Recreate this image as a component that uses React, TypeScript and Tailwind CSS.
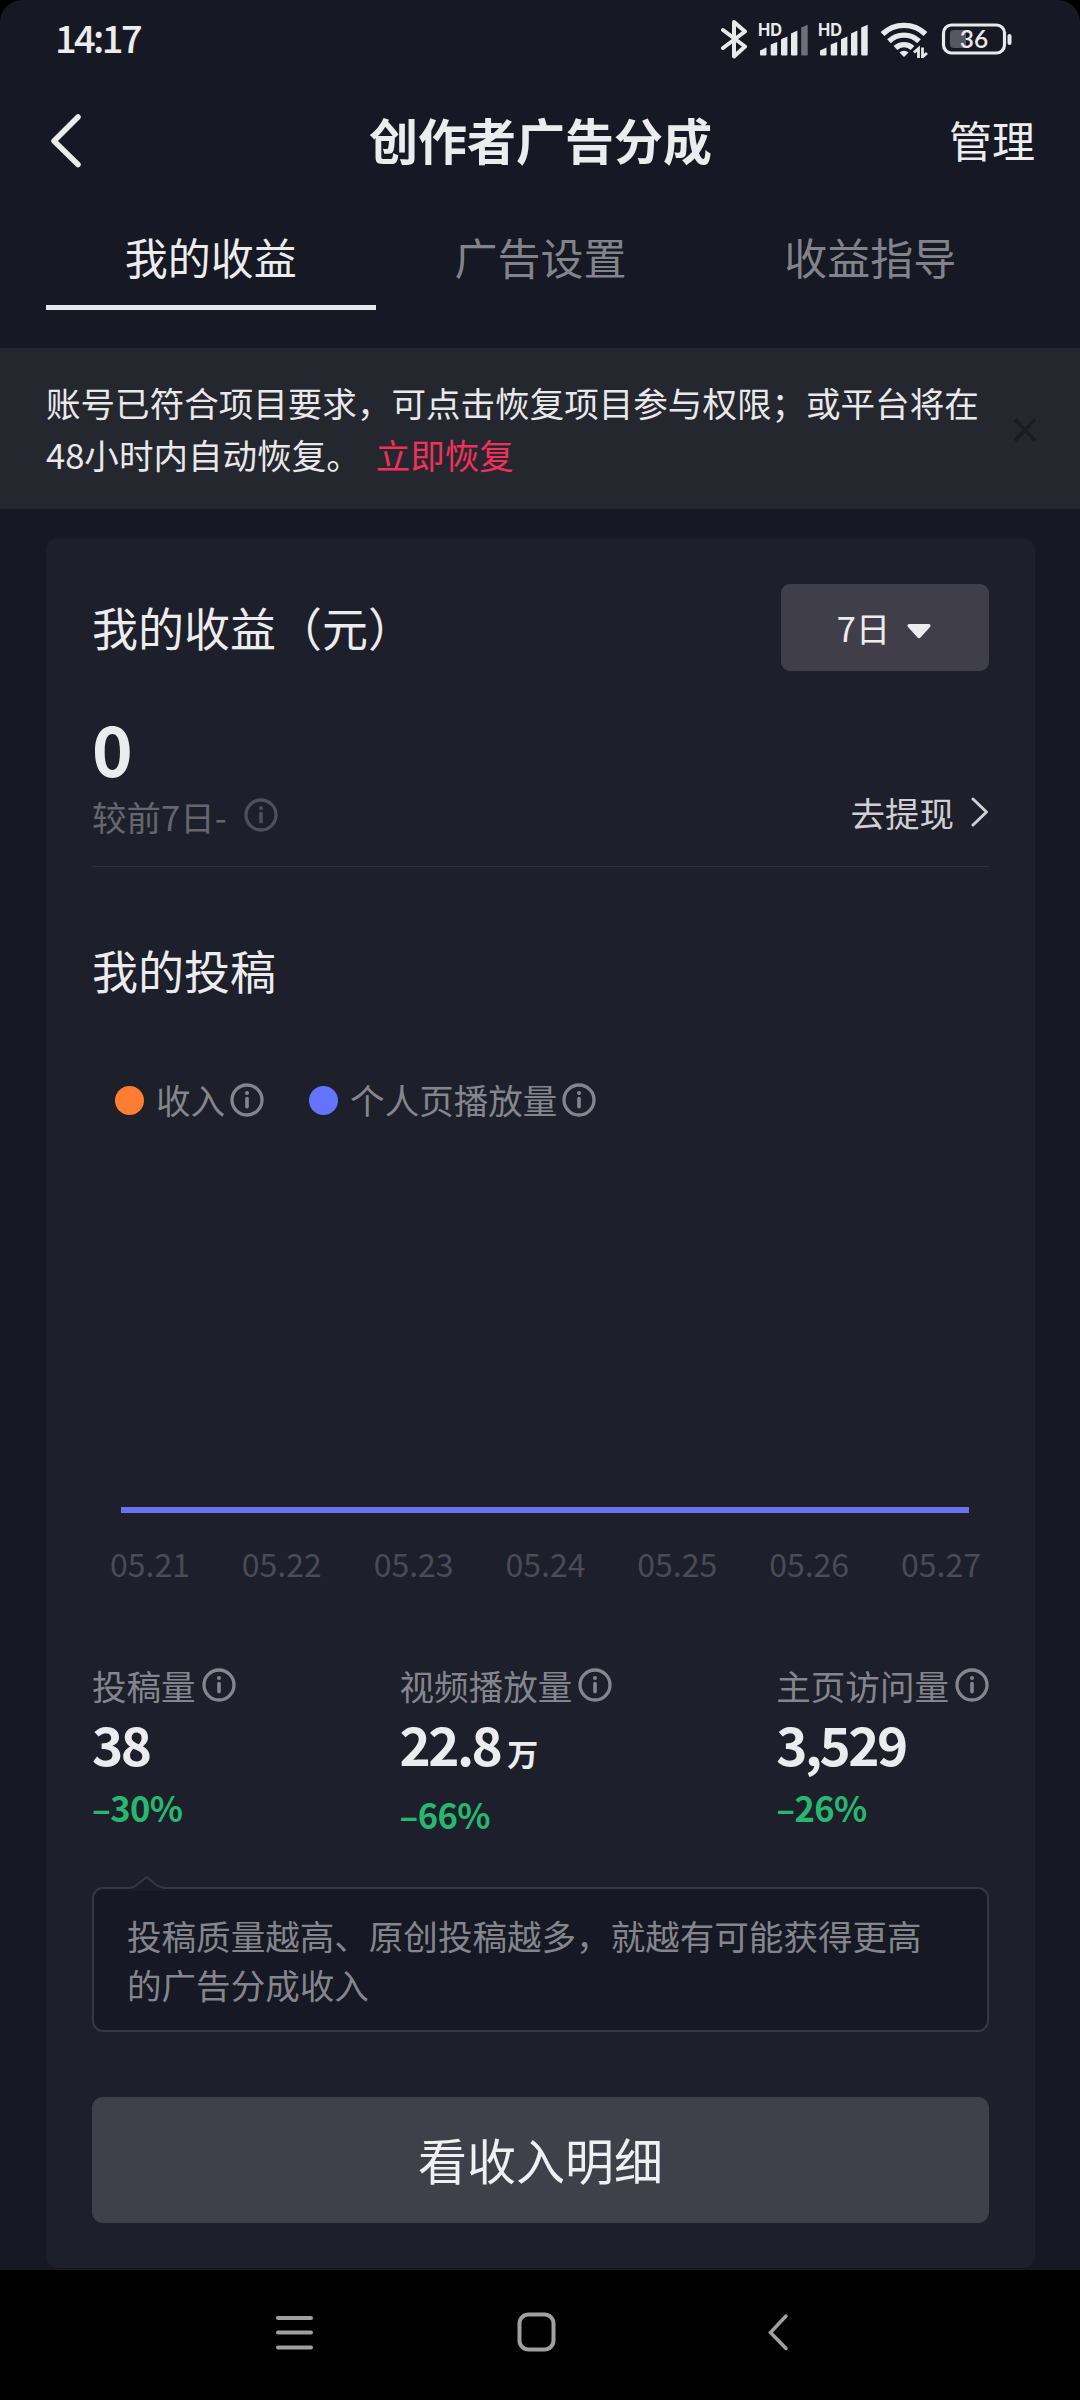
import React from 'react';
import clsx from 'clsx';

interface InfoIconProps {
  className?: string;
}

interface Stat {
  label: string;
  value: string;
  unit?: string;
  change: string;
}

const tabs = ['我的收益', '广告设置', '收益指导'];

const dates = ['05.21', '05.22', '05.23', '05.24', '05.25', '05.26', '05.27'];

const legend = [
  { label: '收入', dot: 'bg-[#ff7d32]' },
  { label: '个人页播放量', dot: 'bg-[#6574ff]' },
];

const stats: Stat[] = [
  { label: '投稿量', value: '38', change: '–30%' },
  { label: '视频播放量', value: '22.8', unit: '万', change: '–66%' },
  { label: '主页访问量', value: '3,529', change: '–26%' },
];

function InfoIcon({ className }: InfoIconProps) {
  return (
    <svg className={clsx('h-[34px] w-[34px] shrink-0', className)} viewBox="0 0 34 34" fill="none">
      <circle cx="17" cy="17" r="15" stroke="currentColor" strokeWidth="3.3" />
      <circle cx="17" cy="10" r="2" fill="currentColor" />
      <path d="M17 15.5v8.2" stroke="currentColor" strokeWidth="3.6" strokeLinecap="round" />
    </svg>
  );
}

function Signal({ weak }: { weak?: boolean }) {
  return (
    <svg className="h-[36px] w-[52px] overflow-visible" viewBox="0 0 52 36" fill="#e9e9ec">
      <text x="0" y="15" fontSize="17" fontWeight="700" fontFamily="Inter, sans-serif" textLength="24" lengthAdjust="spacingAndGlyphs">
        HD
      </text>
      <path d="M2 29.5 8.5 26.5v7a1 1 0 0 1-1 1H3a1 1 0 0 1-1-1z" />
      <path d="M12.7 23.6 19.2 21v12.5a1 1 0 0 1-1 1h-4.5a1 1 0 0 1-1-1z" />
      <path d="M23 18.2 29.4 15.4v18.1a1 1 0 0 1-1 1H24a1 1 0 0 1-1-1z" />
      <path d="M33 12.4 39.4 9.6v23.9a1 1 0 0 1-1 1H34a1 1 0 0 1-1-1z" />
      <path d="M43.2 6.6 49.7 3.8v29.7a1 1 0 0 1-1 1h-4.5a1 1 0 0 1-1-1z" opacity={weak ? 0.42 : 1} />
    </svg>
  );
}

function StatusBar() {
  return (
    <div className="flex h-[78px] items-center justify-between pr-[67px] pl-[55px]">
      <span className="mb-[4px] text-[38px] leading-none font-medium tracking-[-2.6px] text-[#ececee]">14:17</span>
      <div className="flex items-center">
        {/* Bluetooth */}
        <svg className="mr-[10px] h-[40px] w-[28px]" viewBox="0 0 28 40" fill="none" stroke="#e9e9ec" strokeWidth="4" strokeLinecap="round" strokeLinejoin="round">
          <path d="M3 11 25 27.5 14 37.5V3l11 9.5L3 29" />
        </svg>
        <div className="mr-[8px]">
          <Signal weak />
        </div>
        <Signal />
        {/* Wi-Fi */}
        <svg className="ml-[10px] h-[38px] w-[48px]" viewBox="0 0 48 38" fill="none" stroke="#e9e9ec" strokeWidth="5.4">
          <path d="M2.5 14a31 31 0 0 1 43 0" />
          <path d="M9 21.2a21.5 21.5 0 0 1 30 0" />
          <path d="M15.5 28a12.5 12.5 0 0 1 17 0" />
          <path d="M19.5 32.5a6.5 6.5 0 0 1 9 0L24 37z" fill="#e9e9ec" stroke="none" />
          <path d="M38.5 38v-9.5L34 32.5M42.5 27.5V37l4.5-4" strokeWidth="2.8" />
        </svg>
        {/* Battery */}
        <svg className="ml-[14px] h-[32px] w-[71px] overflow-visible" viewBox="0 0 71 32">
          <rect x="1.5" y="2" width="61" height="28" rx="8" fill="none" stroke="#e9e9ec" strokeWidth="3.2" />
          <path d="M12 7h12v18H12a4 4 0 0 1-4-4V11a4 4 0 0 1 4-4z" fill="#57585f" />
          <text x="32" y="24.8" textAnchor="middle" fontSize="24.5" fontWeight="600" fontFamily="Lato, sans-serif" fill="#e9e9ec">
            36
          </text>
          <rect x="65.5" y="11" width="4" height="11" rx="2" fill="#e9e9ec" />
        </svg>
      </div>
    </div>
  );
}

function Header() {
  return (
    <div className="grid h-[126px] grid-cols-[1fr_auto_1fr] items-center pr-[45px] pl-[46px] text-[#ececee]">
      <svg className="h-[54px] w-[40px]" viewBox="0 0 40 54" fill="none" stroke="currentColor" strokeWidth="5.5" strokeLinecap="round" strokeLinejoin="round">
        <path d="M32 3 8 27l24 23.5" />
      </svg>
      <h1 className="mb-[6px] text-[49px] leading-none font-bold">创作者广告分成</h1>
      <span className="mb-[4px] text-right text-[43px] leading-none">管理</span>
    </div>
  );
}

function Tabs() {
  return (
    <div className="grid grid-cols-3 pr-[45px] pl-[46px]">
      {tabs.map((tab, index) => (
        <div
          key={tab}
          className={clsx(
            'flex h-[106px] items-center justify-center border-b-[5px] pt-[3px] text-[43px] leading-none',
            index === 0 ? 'border-[#e8e8ec] text-[#ececee]' : 'border-transparent text-[#83848b]'
          )}
        >
          {tab}
        </div>
      ))}
    </div>
  );
}

function Notice() {
  return (
    <div className="mt-[38px] flex h-[161px] items-center bg-[#25272f] pr-[43px] pl-[46px]">
      <p className="w-[940px] text-[34.56px] leading-[51.5px] text-[#e9e9ec]">
        账号已符合项目要求，可点击恢复项目参与权限；或平台将在
        <br />
        48小时内自动恢复。
        <span className="ml-[15px] text-[#f2305c]">立即恢复</span>
      </p>
      <svg className="mt-[2px] ml-auto h-[24px] w-[24px]" viewBox="0 0 24 24" stroke="#191b25" strokeWidth="3.5">
        <path d="M2 1.5 22 22.5M22 1.5 2 22.5" />
      </svg>
    </div>
  );
}

function StatColumn({ stat }: { stat: Stat }) {
  return (
    <div>
      <div className="flex h-[50px] items-center text-[34.56px] leading-[50px] text-[#85868d]">
        <span className="mb-[3px]">{stat.label}</span>
        <InfoIcon className="mb-[3px] ml-[6px]" />
      </div>
      <div className={clsx('flex items-baseline font-bold text-[#ececee]', stat.unit ? 'h-[78px]' : 'h-[71px]')}>
        <span className="text-[53px] leading-[64px] tracking-[-2.6px]">{stat.value}</span>
        {stat.unit && <span className="ml-[7px] text-[31px] leading-none">{stat.unit}</span>}
      </div>
      <div className="text-[34.5px] leading-[50px] font-bold tracking-[-0.6px] text-[#27b870]">{stat.change}</div>
    </div>
  );
}

function EarningsCard() {
  return (
    <div className="mt-[29px] mr-[45px] ml-[46px] h-[1730px] rounded-[12px] bg-[#1d1f2a] px-[46px] pt-[46px]">
      {/* Earnings */}
      <div className="flex h-[87px] items-center justify-between">
        <h2 className="mb-[3px] text-[46px] leading-none text-[#ececee]">我的收益（元）</h2>
        <button className="flex h-[87px] w-[208px] items-center justify-center rounded-[9px] bg-[#403f49] text-[34.5px] leading-none text-[#ececee]">
          7日
          <svg className="mt-[6px] mr-[2px] ml-[17px] h-[16px] w-[24px]" viewBox="0 0 24 16" fill="currentColor">
            <path d="M2 1h20q2.5.5 1 3L13.500 14.5q-1.500 1.500-3 0L1 4Q-.5 1.500 2 1z" />
          </svg>
        </button>
      </div>
      <div className="mt-[40px] text-[69px] leading-[72px] font-bold text-[#ececee]">0</div>
      <div className="flex h-[84px] items-center justify-between border-b border-[#2f303a] pb-[23px] text-[34.5px] leading-[50px]">
        <div className="mt-[6px] flex items-center text-[#65666e]">
          较前7日-
          <InfoIcon className="mb-[3px] ml-[17px] text-[#4e4f58]" />
        </div>
        <div className="flex items-center text-[#cfcfd4]">
          <span className="mb-[2px]">去提现</span>
          <svg className="mb-[2px] ml-[17px] h-[32px] w-[18px]" viewBox="0 0 18 32" fill="none" stroke="currentColor" strokeWidth="3" strokeLinecap="round" strokeLinejoin="round">
            <path d="M2 3 15.5 16 2 29" />
          </svg>
        </div>
      </div>

      {/* Posts chart */}
      <h2 className="mt-[79px] text-[46px] leading-[46px] text-[#ececee]">我的投稿</h2>
      <div className="mt-[82px] ml-[23px] flex gap-[45px]">
        {legend.map((item) => (
          <div key={item.label} className="flex items-center text-[34.56px] leading-[50px] text-[#85868d]">
            <span className={clsx('mt-[2px] mr-[12px] h-[29px] w-[29px] rounded-full', item.dot)} />
            <span>{item.label}</span>
            <InfoIcon className="mt-[1px] ml-[5px]" />
          </div>
        ))}
      </div>
      <div className="mt-[383px] ml-[29px] h-[6px] w-[848px] bg-[#6b70f0]" />
      <div className="mt-[25px] flex w-[921px] justify-between pr-[33px] pl-[18px]">
        {dates.map((date) => (
          <span key={date} className="w-[79px] text-center text-[32px] leading-[50px] whitespace-nowrap text-[#4a4b55]">
            {date}
          </span>
        ))}
      </div>

      {/* Stats */}
      <div className="mt-[73px] flex justify-between">
        {stats.map((stat) => (
          <StatColumn key={stat.label} stat={stat} />
        ))}
      </div>

      {/* Tip */}
      <div className="relative mt-[48px] h-[145px] rounded-[11px] border-[2px] border-[#363741] bg-[#161823] px-[33px] pt-[22px] text-[34.56px] leading-[48.7px] text-[#85868d]">
        <svg className="absolute -top-[14px] left-[34px] h-[16px] w-[38px]" viewBox="0 0 38 16">
          <path d="M0 14Q5 13.5 8 10.5L18.5 2.5 29 10.5q4 3 9 3.5v2H0z" fill="#1a1c26" />
          <path d="M0 13q5 0 8-2.5L18.5 2 29 10.5q4 2.5 9 2.5" fill="none" stroke="#363741" strokeWidth="2" />
        </svg>
        投稿质量越高、原创投稿越多，就越有可能获得更高的广告分成收入
      </div>

      <button className="mt-[65px] flex h-[126px] w-full items-center justify-center rounded-[11px] bg-[#3f4049] pb-[3px] text-[49px] leading-none text-[#f0f0f2]">
        看收入明细
      </button>
    </div>
  );
}

function NavBar() {
  return (
    <div className="flex h-[130px] items-start bg-black pt-[42px] pl-[275px] text-[#a0a0a0]">
      <svg className="h-[40px] w-[40px]" viewBox="0 0 40 40" stroke="currentColor" strokeWidth="4" strokeLinecap="round">
        <path d="M3 6h33M3 20.5h33M3 35.5h33" />
      </svg>
      <svg className="ml-[202px] h-[40px] w-[40px]" viewBox="0 0 40 40" fill="none" stroke="currentColor" strokeWidth="4">
        <rect x="2.5" y="2.5" width="34" height="35" rx="9" />
      </svg>
      <svg className="ml-[210px] h-[40px] w-[24px]" viewBox="0 0 24 40" fill="none" stroke="currentColor" strokeWidth="3.5" strokeLinecap="round">
        <path d="M19 4 3.5 20.5l15.5 16" />
      </svg>
    </div>
  );
}

export default function App() {
  return (
    <div className="w-[1080px] bg-black font-['Noto_Sans_CJK_SC',sans-serif]">
      <div className="h-[2270px] overflow-hidden rounded-t-[22px] bg-[#161823]">
        <StatusBar />
        <Header />
        <Tabs />
        <Notice />
        <EarningsCard />
      </div>
      <NavBar />
    </div>
  );
}
